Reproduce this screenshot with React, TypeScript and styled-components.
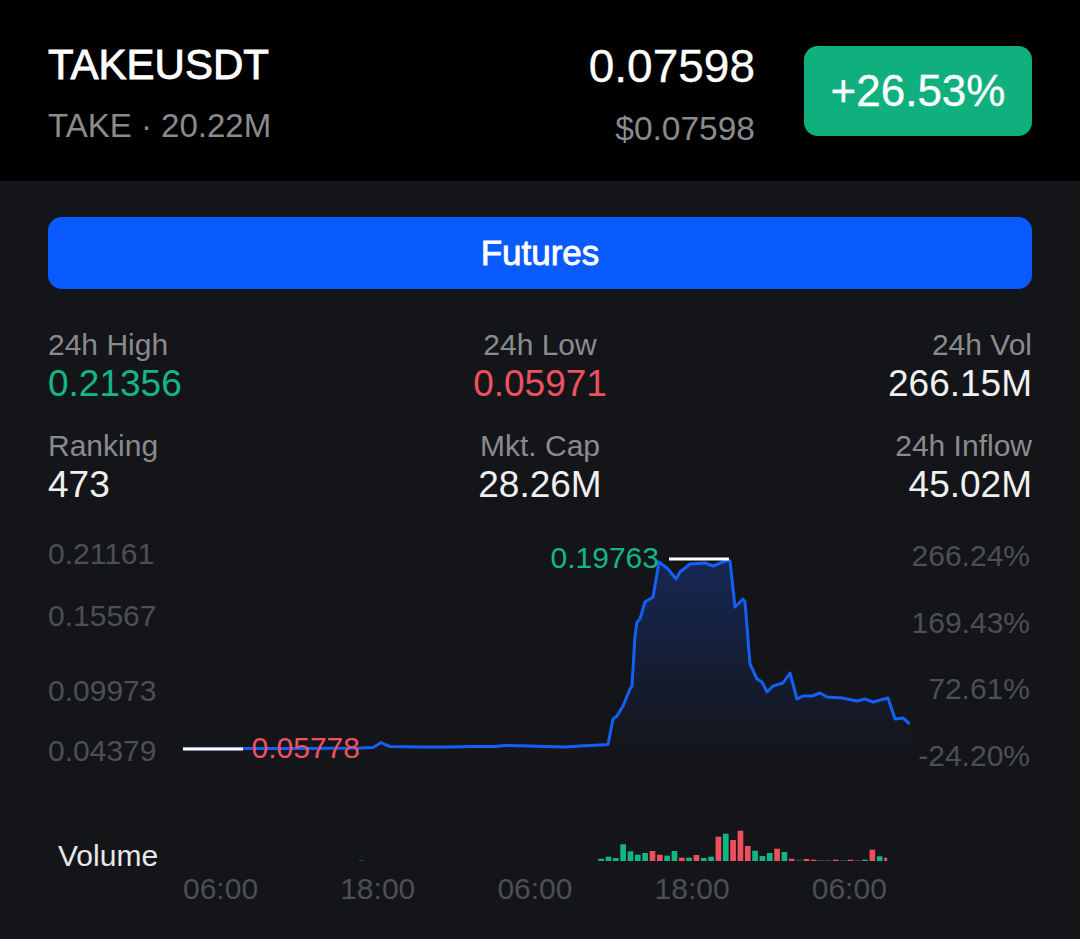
import styled, { createGlobalStyle } from 'styled-components'

const GlobalStyle = createGlobalStyle`
  html, body {
    margin: 0;
    padding: 0;
    background: #141518;
  }
  body {
    font-family: "Liberation Sans", Arial, sans-serif;
    -webkit-font-smoothing: antialiased;
  }
`

const Page = styled.div`
  width: 1080px;
  min-height: 939px;
  background: #141518;
`

const Header = styled.header`
  height: 181px;
  box-sizing: border-box;
  background: #000;
  padding: 40px 48px 0;
  display: flex;
  align-items: flex-start;
`

const Symbol = styled.div`
  flex: 1;
`

/* medium weight: regular face with a thin stroke */
const Title = styled.div`
  font-size: 42px;
  line-height: 50px;
  color: #fff;
  -webkit-text-stroke: 0.9px #fff;
`

const Sub = styled.div`
  margin-top: 16px;
  font-size: 33px;
  line-height: 40px;
  color: #8b8b8b;
`

const PriceBox = styled.div`
  text-align: right;
`

const Price = styled.div`
  font-size: 46px;
  line-height: 52px;
  color: #fff;
  -webkit-text-stroke: 0.3px #fff;
`

const UsdPrice = styled.div`
  margin-top: 17px;
  font-size: 33.5px;
  line-height: 40px;
  color: #8b8b8b;
`

const ChangeBadge = styled.div`
  margin: 6px 0 0 49px;
  width: 228px;
  height: 90px;
  border-radius: 14px;
  background: #0fb07e;
  color: #fff;
  font-size: 44px;
  -webkit-text-stroke: 0.3px #fff;
  display: flex;
  align-items: center;
  justify-content: center;
`

const Main = styled.main`
  padding: 36px 48px 32px;
`

const FuturesButton = styled.button`
  width: 100%;
  height: 72px;
  border: none;
  border-radius: 14px;
  background: #0a5bff;
  color: #fff;
  font-family: inherit;
  font-size: 35px;
  -webkit-text-stroke: 0.8px #fff;
  display: flex;
  align-items: center;
  justify-content: center;
`

const Stats = styled.div`
  margin-top: 39px;
  display: grid;
  grid-template-columns: 1fr 1fr 1fr;
  row-gap: 24px;
`

const Stat = styled.div<{ $align: 'left' | 'center' | 'right' }>`
  text-align: ${(p) => p.$align};
`

const StatLabel = styled.div`
  font-size: 30px;
  line-height: 34px;
  color: #8a8b8d;
`

const StatValue = styled.div<{ $tone?: 'up' | 'down' }>`
  margin-top: 1px;
  font-size: 37px;
  line-height: 42px;
  color: ${(p) => (p.$tone === 'up' ? '#16b587' : p.$tone === 'down' ? '#f0505f' : '#f0f0f0')};
`

const Chart = styled.section`
  margin-top: 23px;
`

const ChartRow = styled.div`
  display: flex;
  height: 250px;
`

const LeftAxis = styled.div`
  width: 135px;
  display: flex;
  flex-direction: column;
`

const RightAxis = styled.div`
  flex: 1;
  display: flex;
  flex-direction: column;
  align-items: flex-end;
  padding: 10px 2px 0 0;
  gap: 32.5px;
`

const AxisLabel = styled.div<{ $offset?: number }>`
  margin-top: ${(p) => p.$offset ?? 0}px;
  font-size: 30px;
  line-height: 34px;
  color: #4c4f54;
`

const VolumeRow = styled.div`
  margin-top: 48px;
  height: 45px;
  display: flex;
`

const VolumeLabel = styled.div`
  width: 125px;
  padding-left: 10px;
  align-self: flex-end;
  font-size: 30px;
  line-height: 32px;
  color: #e8e8e8;
`

const TimeRow = styled.div`
  height: 34px;
  padding-left: 135px;
  display: flex;
`

const Tick = styled.div`
  width: 157.2px;
  font-size: 30px;
  line-height: 34px;
  color: #4c4f54;
`

const linePts: [number, number][] = [
  [183, 749.5], [300, 749.5], [360, 749], [373, 748.5], [378, 745.5], [381, 743.5], [385, 745.5],
  [390, 747.5], [420, 748], [450, 748], [470, 747.5], [495, 747.5], [505, 746.5], [530, 747],
  [545, 747.5], [565, 748], [580, 747], [600, 746], [608, 745.5], [613, 720], [617, 717],
  [623, 707], [630, 690], [632, 687], [635, 637], [637, 623], [640, 620], [645, 603], [653, 598],
  [659, 563], [668, 570], [676, 580], [680, 573], [690, 565], [705, 564], [713, 567], [728, 561],
  [730, 562], [735, 608], [743, 600], [745, 603], [750, 665], [757, 680], [762, 683], [767, 693],
  [773, 687], [783, 684], [790, 674], [797, 700], [803, 697], [812, 697], [820, 694], [827, 698],
  [842, 699], [857, 702], [865, 700], [873, 703], [888, 699], [895, 720], [903, 719], [910, 725],
]

const linePath = linePts.map(([x, y], i) => `${i ? 'L' : 'M'}${x} ${y}`).join(' ')
const areaPath = `${linePath} L910 780 L183 780 Z`

// height, up/down, dim
const volumes: [number, 'u' | 'd', boolean?][] = [
  [2.3, 'u'], [4.3, 'u'], [3, 'u'], [16.7, 'u'], [9.7, 'u'], [6.3, 'u'], [8, 'u'], [10, 'd'],
  [6.3, 'd'], [5.3, 'u'], [10, 'u'], [3.3, 'd'], [3.3, 'u'], [6, 'd'], [3, 'u'], [4.3, 'u'],
  [24.3, 'd'], [27.3, 'u'], [21, 'd'], [30.3, 'd'], [15, 'd'], [10.3, 'u'], [5, 'u'], [8, 'u'],
  [12.3, 'd'], [9, 'u'], [2.3, 'd'], [1.3, 'u', true], [2, 'd'], [1.3, 'd'], [1, 'u', true],
  [1, 'd', true], [1.3, 'd'], [1, 'u', true], [1.3, 'd'], [1, 'd', true], [1.3, 'u'], [11.3, 'd'],
  [4.7, 'u'], [3.3, 'd'],
]

const ticks = ['06:00', '18:00', '06:00', '18:00', '06:00']

function PriceChart() {
  return (
    <svg width="727" height="250" viewBox="183 530 727 250">
      <defs>
        <linearGradient id="area" gradientUnits="userSpaceOnUse" x1="0" y1="560" x2="0" y2="772">
          <stop offset="0" stopColor="#1d5cff" stopOpacity="0.26" />
          <stop offset="0.75" stopColor="#1d5cff" stopOpacity="0.05" />
          <stop offset="1" stopColor="#1d5cff" stopOpacity="0" />
        </linearGradient>
      </defs>
      <path d={areaPath} fill="url(#area)" />
      <path d={linePath} fill="none" stroke="#145ff7" strokeWidth="3" strokeLinejoin="round" />
      <line x1="183" y1="750" x2="243" y2="750" stroke="#fff" strokeWidth="3" />
      <line x1="669" y1="560" x2="729" y2="560" stroke="#fff" strokeWidth="3" />
      <text x="251.5" y="759.3" fontSize="30" fill="#f0505f" fontFamily="Liberation Sans, Arial, sans-serif">
        0.05778
      </text>
      <text x="659" y="569.3" fontSize="30" fill="#16b587" textAnchor="end" fontFamily="Liberation Sans, Arial, sans-serif">
        0.19763
      </text>
    </svg>
  )
}

function VolumeBars() {
  return (
    <svg width="727" height="36" viewBox="183 828 727 36">
      <rect x="359" y="861.3" width="5" height="0.8" fill="#16b587" opacity="0.5" />
      {volumes.map(([h, dir, dim], i) => (
        <rect
          key={i}
          x={598.3 + i * 7.33}
          y={862 - h}
          width={i === volumes.length - 1 ? 3 : 5.7}
          height={h}
          fill={dir === 'u' ? '#12b584' : '#f04d5d'}
          opacity={dim ? 0.45 : 1}
        />
      ))}
    </svg>
  )
}

export default function App() {
  return (
    <Page>
      <GlobalStyle />
      <Header>
        <Symbol>
          <Title>TAKEUSDT</Title>
          <Sub>TAKE · 20.22M</Sub>
        </Symbol>
        <PriceBox>
          <Price>0.07598</Price>
          <UsdPrice>$0.07598</UsdPrice>
        </PriceBox>
        <ChangeBadge>+26.53%</ChangeBadge>
      </Header>
      <Main>
        <FuturesButton>Futures</FuturesButton>
        <Stats>
          <Stat $align="left">
            <StatLabel>24h High</StatLabel>
            <StatValue $tone="up">0.21356</StatValue>
          </Stat>
          <Stat $align="center">
            <StatLabel>24h Low</StatLabel>
            <StatValue $tone="down">0.05971</StatValue>
          </Stat>
          <Stat $align="right">
            <StatLabel>24h Vol</StatLabel>
            <StatValue>266.15M</StatValue>
          </Stat>
          <Stat $align="left">
            <StatLabel>Ranking</StatLabel>
            <StatValue>473</StatValue>
          </Stat>
          <Stat $align="center">
            <StatLabel>Mkt. Cap</StatLabel>
            <StatValue>28.26M</StatValue>
          </Stat>
          <Stat $align="right">
            <StatLabel>24h Inflow</StatLabel>
            <StatValue>45.02M</StatValue>
          </Stat>
        </Stats>
        <Chart>
          <ChartRow>
            <LeftAxis>
              <AxisLabel $offset={8}>0.21161</AxisLabel>
              <AxisLabel $offset={27.7}>0.15567</AxisLabel>
              <AxisLabel $offset={41}>0.09973</AxisLabel>
              <AxisLabel $offset={26}>0.04379</AxisLabel>
            </LeftAxis>
            <PriceChart />
            <RightAxis>
              <AxisLabel>266.24%</AxisLabel>
              <AxisLabel>169.43%</AxisLabel>
              <AxisLabel>72.61%</AxisLabel>
              <AxisLabel>-24.20%</AxisLabel>
            </RightAxis>
          </ChartRow>
          <VolumeRow>
            <VolumeLabel>Volume</VolumeLabel>
            <VolumeBars />
          </VolumeRow>
          <TimeRow>
            {ticks.map((t, i) => (
              <Tick key={i}>{t}</Tick>
            ))}
          </TimeRow>
        </Chart>
      </Main>
    </Page>
  )
}
